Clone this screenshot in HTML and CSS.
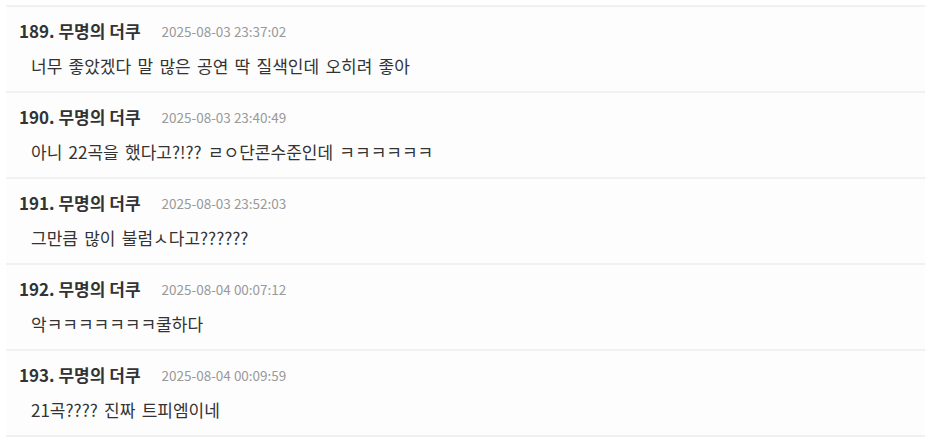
FILE: index.html
```html
<!DOCTYPE html>
<html>
<head>
  <meta charset="utf-8">
  <title>댓글</title>
  <link rel="stylesheet" href="styles.css">
</head>
<body>
  <div class="comment-list">
    <div class="comment">
      <div class="comment-head">
        <span class="writer">189. 무명의 더쿠</span>
        <span class="date">2025-08-03 23:37:02</span>
      </div>
      <div class="comment-body">너무 좋았겠다 말 많은 공연 딱 질색인데 오히려 좋아</div>
    </div>
    <div class="comment">
      <div class="comment-head">
        <span class="writer">190. 무명의 더쿠</span>
        <span class="date">2025-08-03 23:40:49</span>
      </div>
      <div class="comment-body">아니 22곡을 했다고?!?? ㄹㅇ단콘수준인데 ㅋㅋㅋㅋㅋㅋ</div>
    </div>
    <div class="comment">
      <div class="comment-head">
        <span class="writer">191. 무명의 더쿠</span>
        <span class="date">2025-08-03 23:52:03</span>
      </div>
      <div class="comment-body">그만큼 많이 불럼ㅅ다고??????</div>
    </div>
    <div class="comment">
      <div class="comment-head">
        <span class="writer">192. 무명의 더쿠</span>
        <span class="date">2025-08-04 00:07:12</span>
      </div>
      <div class="comment-body">악ㅋㅋㅋㅋㅋㅋㅋ쿨하다</div>
    </div>
    <div class="comment">
      <div class="comment-head">
        <span class="writer">193. 무명의 더쿠</span>
        <span class="date">2025-08-04 00:09:59</span>
      </div>
      <div class="comment-body">21곡???? 진짜 트피엠이네</div>
    </div>
  </div>
</body>
</html>
```
FILE: styles.css
```css
body {
  margin: 0;
  background: #fff;
  font-family: "Noto Sans CJK KR", "Noto Sans", sans-serif;
  color: #333;
}
.comment-list {
  padding: 5px 0 0 6px;
}
.comment {
  border-top: 2px solid #f1f1f1;
  background: #fdfdfd;
  padding: 13px 0 14px 13px;
}
.comment:last-child {
  border-bottom: 2px solid #eef2ee;
}
.comment-head {
  display: flex;
  align-items: center;
  gap: 21px;
  height: 22px;
}
.writer {
  font-size: 17px;
  line-height: 22px;
  font-weight: bold;
  color: #333;
}
.date {
  font-size: 13.5px;
  line-height: 22px;
  color: #999;
}
.comment-body {
  margin-top: 13px;
  padding-left: 12px;
  font-size: 17px;
  line-height: 22px;
  word-spacing: 2.5px;
  color: #333;
}
```
